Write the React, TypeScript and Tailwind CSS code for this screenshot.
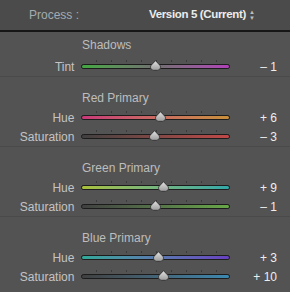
import React from "react";

type SliderProps = { label: string; value: number; track: string };

function Thumb() {
  return (
    <svg width="11" height="11" viewBox="0 0 11 11" className="block">
      <defs>
        <linearGradient id="tg" x1="0" y1="0" x2="0" y2="1">
          <stop offset="0" stopColor="#e2e2e2" />
          <stop offset="1" stopColor="#9c9c9c" />
        </linearGradient>
      </defs>
      <path
        d="M5.5 0.7 L9.8 5.2 Q10.5 6 10.5 7.2 Q10.5 10.3 7.5 10.3 L3.5 10.3 Q0.5 10.3 0.5 7.2 Q0.5 6 1.2 5.2 Z"
        fill="url(#tg)"
        stroke="#2a2a2a"
        strokeWidth="0.8"
      />
    </svg>
  );
}

function SliderRow({ label, value, track }: SliderProps) {
  const W = 150;
  const pos = 75 + (value / 100) * 74.5;
  const ticks = [1, 2, 3, 4, 5, 6, 7, 8, 9];
  const text = value > 0 ? `+ ${value}` : value < 0 ? `– ${Math.abs(value)}` : "0";
  return (
    <div className="flex h-[19px] items-center">
      <div className="w-[76px] pr-[1px] text-right text-[12px] text-[#c4c4c4]">{label}</div>
      <div className="relative ml-[6px] h-[19px] w-[150px]">
        {ticks.map((t) => (
          <div
            key={t}
            className="absolute top-[3px] h-[2px] w-[1px] bg-[#3c3c3c]"
            style={{ left: (t * W) / 10 }}
          />
        ))}
        <div className="absolute left-0 right-0 top-[7px] h-[5px] rounded-full border border-[#1c1c1c] bg-[#1c1c1c]">
          <div className={`h-full w-full rounded-full ${track}`} />
        </div>
        <div className="absolute top-[3px]" style={{ left: pos - 5.5 }}>
          <Thumb />
        </div>
      </div>
      <div className="ml-auto w-[60px] pr-[13px] text-right text-[12px] text-[#eeeeee]">{text}</div>
    </div>
  );
}

function Heading({ children }: { children: React.ReactNode }) {
  return (
    <div className="flex h-[21px] items-center pl-[82px] text-[12px] text-[#bdbdbd]">{children}</div>
  );
}

export default function App() {
  return (
    <div
      className="h-[292px] w-[290px] overflow-hidden bg-[#535353]"
      style={{ fontFamily: '"Liberation Sans", Arial, sans-serif' }}
    >
      <div className="flex h-[30px] items-center bg-[#4b4b4b] text-[12px]">
        <div className="w-[149px] whitespace-nowrap pl-[29px] text-[#a3abb0]">Process :</div>
        <div className="flex items-center whitespace-nowrap text-[#ececec]">
          <span className="text-[11.5px] font-semibold tracking-[-0.35px]">Version 5 (Current)</span>
          <span className="ml-[3px] flex flex-col items-center leading-none text-[#bdbdbd]">
            <span className="text-[6px]">▲</span>
            <span className="text-[6px]">▼</span>
          </span>
        </div>
      </div>
      <div className="h-[2px] bg-[#161616]" />

      <div className="border-b border-[#4a4a4a] pt-[2px]">
        <Heading>Shadows</Heading>
        <div className="pt-[2px]">
          <SliderRow label="Tint" value={-1} track="bg-linear-to-r from-[#40a840] via-[#707070] to-[#b040b8]" />
        </div>
      </div>

      <div className="border-b border-[#4a4a4a] pt-[10px]">
        <Heading>Red Primary</Heading>
        <SliderRow label="Hue" value={6} track="bg-linear-to-r from-[#c83878] to-[#c8903a]" />
        <SliderRow label="Saturation" value={-3} track="bg-linear-to-r from-[#404040] to-[#c04848]" />
      </div>

      <div className="border-b border-[#4a4a4a] pt-[10px]">
        <Heading>Green Primary</Heading>
        <SliderRow label="Hue" value={9} track="bg-linear-to-r from-[#a8c038] to-[#30a8a8]" />
        <SliderRow label="Saturation" value={-1} track="bg-linear-to-r from-[#404040] to-[#68a848]" />
      </div>

      <div className="pt-[10px]">
        <Heading>Blue Primary</Heading>
        <SliderRow label="Hue" value={3} track="bg-linear-to-r from-[#30a898] to-[#6840c0]" />
        <SliderRow label="Saturation" value={10} track="bg-linear-to-r from-[#404040] to-[#3c88b0]" />
      </div>
    </div>
  );
}
